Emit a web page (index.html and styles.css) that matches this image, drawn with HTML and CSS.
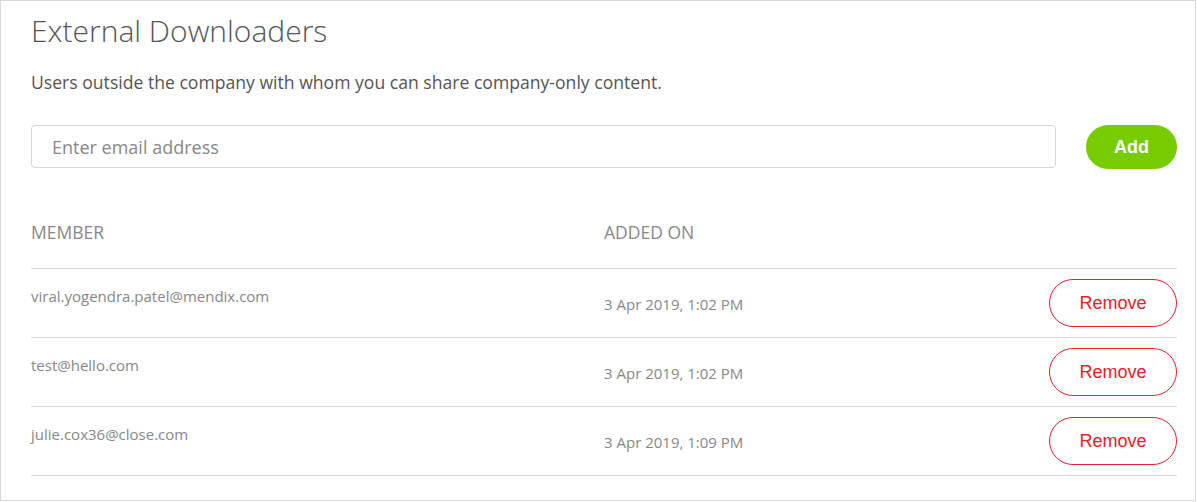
FILE: index.html
```html
<!DOCTYPE html>
<html>
<head>
<meta charset="utf-8">
<link rel="stylesheet" href="styles.css">
</head>
<body>
<div class="panel">
  <h1 class="title">External Downloaders</h1>
  <p class="subtitle">Users outside the company with whom you can share company-only content.</p>
  <div class="add-row">
    <input class="email-input" type="text" placeholder="Enter email address">
    <button class="btn-add">Add</button>
  </div>
  <div class="table">
    <div class="row head">
      <div class="cell member">MEMBER</div>
      <div class="cell added">ADDED ON</div>
      <div class="cell action"></div>
    </div>
    <div class="row">
      <div class="cell member">viral.yogendra.patel@mendix.com</div>
      <div class="cell added">3 Apr 2019, 1:02 PM</div>
      <div class="cell action"><button class="btn-remove">Remove</button></div>
    </div>
    <div class="row">
      <div class="cell member">test@hello.com</div>
      <div class="cell added">3 Apr 2019, 1:02 PM</div>
      <div class="cell action"><button class="btn-remove">Remove</button></div>
    </div>
    <div class="row">
      <div class="cell member">julie.cox36@close.com</div>
      <div class="cell added">3 Apr 2019, 1:09 PM</div>
      <div class="cell action"><button class="btn-remove">Remove</button></div>
    </div>
  </div>
</div>
</body>
</html>
```
FILE: styles.css
```css
html, body {
  margin: 0;
  padding: 0;
  background: #fff;
}
.panel {
  box-sizing: border-box;
  width: 1196px;
  height: 501px;
  border: 1px solid #d9d9d9;
  padding: 10px 18px 0 30px;
  font-family: "Open Sans", sans-serif;
}
.title {
  margin: 0;
  font-size: 30px;
  line-height: 40px;
  font-weight: 300;
  color: #555;
}
.subtitle {
  margin: 19px 0 0;
  font-size: 17.6px;
  line-height: 24px;
  color: #555;
}
.add-row {
  display: flex;
  align-items: flex-start;
  gap: 30px;
  margin-top: 31px;
}
.email-input {
  flex: 1;
  box-sizing: border-box;
  height: 43px;
  border: 1px solid #d6d6d6;
  border-radius: 4px;
  padding: 0 20px;
  font-family: "Open Sans", sans-serif;
  font-size: 18px;
  color: #555;
  outline: none;
}
.email-input::placeholder {
  color: #888;
}
.btn-add {
  box-sizing: border-box;
  width: 91px;
  height: 44px;
  border: none;
  border-radius: 22px;
  background: #77cc00;
  color: #fff;
  font-family: "Liberation Sans", Arial, sans-serif;
  font-size: 18px;
  font-weight: 700;
  cursor: pointer;
}
.table {
  margin-top: 51px;
}
.row {
  display: grid;
  grid-template-columns: 573px 1fr 128px;
  border-bottom: 1px solid #d9d9d9;
  padding: 10px 0;
}
.row.head {
  padding: 0 0 24px;
}
.cell {
  color: #888;
  font-size: 15px;
}
.head .cell {
  font-size: 17.5px;
  line-height: 24px;
  color: #888;
}
.row:not(.head) .member {
  padding-top: 7px;
}
.row:not(.head) .added {
  align-self: center;
  padding-top: 1px;
}
.btn-remove {
  box-sizing: border-box;
  width: 128px;
  height: 48px;
  border: 1px solid #e8202a;
  border-radius: 24px;
  background: #fff;
  color: #e8202a;
  font-family: "Liberation Sans", Arial, sans-serif;
  font-size: 18px;
  cursor: pointer;
}
```
